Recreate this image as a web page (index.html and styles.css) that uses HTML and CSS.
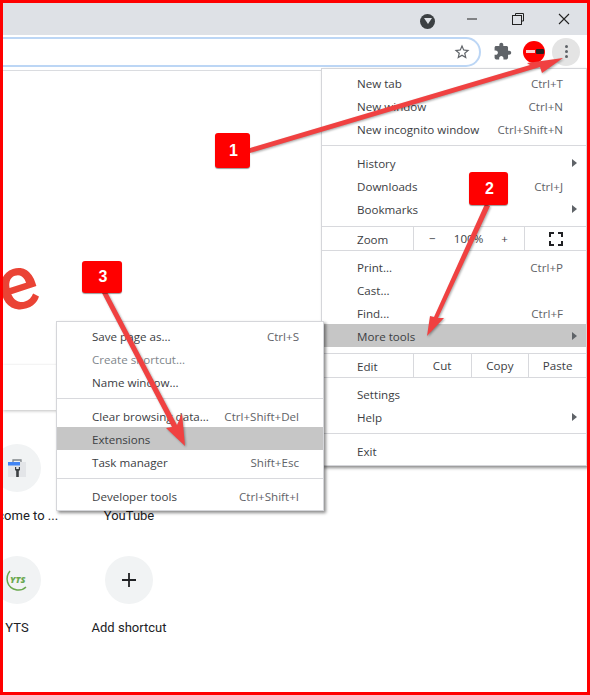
FILE: index.html
```html
<!DOCTYPE html>
<html lang="en">
<head>
  <meta charset="UTF-8" />
  <meta name="viewport" content="width=device-width, initial-scale=1.0" />
  <title>Chrome menu - More tools - Extensions</title>
  <link rel="stylesheet" href="styles.css">
</head>
<body>
  <div class="frame">
    <div class="titlebar">
      <span class="tab-search"><svg width="8" height="6" viewBox="0 0 8 6"><path d="M0 0h8L4 6z" fill="#dee1e6"/></svg></span>
      <span class="win-btn"><svg width="12" height="12" viewBox="0 0 12 12"><path d="M1 6h10" stroke="#222" stroke-width="1"/></svg></span>
      <span class="win-btn"><svg width="12" height="12" viewBox="0 0 12 12" fill="none" stroke="#222"><path d="M3.5 2.5V.5h8v7.5h-2"/><rect x=".5" y="2.5" width="9" height="9"/></svg></span>
      <span class="win-btn"><svg width="12" height="12" viewBox="0 0 12 12"><path d="M1 1l10 10M11 1L1 11" stroke="#222" stroke-width="1.1"/></svg></span>
    </div>

    <div class="toolbar">
      <div class="omnibox">
        <svg class="star" width="18" height="18" viewBox="0 0 24 24"><path fill="#5f6368" d="M22 9.24l-7.19-.62L12 2 9.19 8.63 2 9.24l5.46 4.73L5.82 21 12 17.27 18.18 21l-1.63-7.03L22 9.24zM12 15.4l-3.76 2.27 1-4.28-3.32-2.88 4.38-.38L12 6.1l1.71 4.04 4.38.38-3.32 2.88 1 4.28L12 15.4z"/></svg>
      </div>
      <svg class="puzzle" width="19" height="19" viewBox="0 0 24 24"><path fill="#5f6368" d="M20.5 11H19V7c0-1.1-.9-2-2-2h-4V3.5C13 2.12 11.88 1 10.5 1S8 2.12 8 3.5V5H4c-1.1 0-1.99.9-1.99 2v3.8H3.5c1.49 0 2.7 1.21 2.7 2.7s-1.21 2.7-2.7 2.7H2V20c0 1.1.9 2 2 2h3.8v-1.5c0-1.49 1.21-2.7 2.7-2.7 1.49 0 2.7 1.21 2.7 2.7V22H17c1.1 0 2-.9 2-2v-4h1.5c1.38 0 2.5-1.12 2.5-2.5S21.88 11 20.5 11z"/></svg>
      <span class="avatar"><span class="avatar-light"></span><span class="avatar-dark"></span></span>
      <span class="kebab"><i></i><i></i><i></i></span>
    </div>

    <div class="page">
      <div class="logo">e</div>
      <div class="searchbox"></div>
      <div class="tiles">
        <div class="tile">
          <span class="tile-icon">
            <svg width="20" height="20" viewBox="0 0 20 20">
              <path d="M6 4.500V2h8v2.500" fill="none" stroke="#80868b" stroke-width="1.300"/>
              <rect x="1" y="4" width="18" height="15" fill="#e3e5e8"/>
              <rect x="1" y="4" width="12" height="3.500" fill="#4285f4"/>
              <path d="M8 9v3l1.200 1V19h2.600v-6L13 12V9h-1.200v2H9.200V9z" fill="#3c4043"/>
            </svg>
          </span>
          <span class="tile-label">Welcome to ...</span>
        </div>
        <div class="tile">
          <span class="tile-icon"></span>
          <span class="tile-label">YouTube</span>
        </div>
        <div class="tile">
          <span class="tile-icon">
            <svg width="24" height="24" viewBox="0 0 24 24">
              <path d="M5 3C0 9 1 20 12 22c4 .5 7-1 9-3" fill="none" stroke="#6aa84f" stroke-width="1.500"/>
              <text x="5" y="15" class="yts-text">YTS</text>
            </svg>
          </span>
          <span class="tile-label">YTS</span>
        </div>
        <div class="tile">
          <span class="tile-icon">
            <svg width="16" height="16" viewBox="0 0 16 16"><path d="M8 1v14M1 8h14" stroke="#202124" stroke-width="1.800"/></svg>
          </span>
          <span class="tile-label">Add shortcut</span>
        </div>
      </div>
    </div>

    <div class="menu main-menu">
      <div class="item"><span>New tab</span><span class="key">Ctrl+T</span></div>
      <div class="item"><span>New window</span><span class="key">Ctrl+N</span></div>
      <div class="item"><span>New incognito window</span><span class="key">Ctrl+Shift+N</span></div>
      <div class="sep"></div>
      <div class="item"><span>History</span><span class="caret"></span></div>
      <div class="item"><span>Downloads</span><span class="key">Ctrl+J</span></div>
      <div class="item"><span>Bookmarks</span><span class="caret"></span></div>
      <div class="sep sep-above-row"></div>
      <div class="cell-row">
        <span class="cell-name">Zoom</span>
        <span class="zoom-box"><span>−</span><span>100%</span><span>+</span></span>
        <span class="full-box">
          <svg width="14" height="14" viewBox="0 0 14 14" fill="none" stroke="#202124" stroke-width="2"><path d="M1 5V1h4M9 1h4v4M13 9v4H9M5 13H1V9"/></svg>
        </span>
      </div>
      <div class="sep sep-below-row"></div>
      <div class="item"><span>Print...</span><span class="key">Ctrl+P</span></div>
      <div class="item"><span>Cast...</span></div>
      <div class="item"><span>Find...</span><span class="key">Ctrl+F</span></div>
      <div class="item active"><span>More tools</span><span class="caret"></span></div>
      <div class="sep sep-above-row"></div>
      <div class="cell-row">
        <span class="cell-name">Edit</span>
        <span class="edit-cell">Cut</span>
        <span class="edit-cell">Copy</span>
        <span class="edit-cell">Paste</span>
      </div>
      <div class="sep sep-below-row"></div>
      <div class="item"><span>Settings</span></div>
      <div class="item"><span>Help</span><span class="caret"></span></div>
      <div class="sep"></div>
      <div class="item"><span>Exit</span></div>
    </div>

    <div class="menu sub-menu">
      <div class="item"><span>Save page as...</span><span class="key">Ctrl+S</span></div>
      <div class="item disabled"><span>Create shortcut...</span></div>
      <div class="item"><span>Name window...</span></div>
      <div class="sep"></div>
      <div class="item"><span>Clear browsing data...</span><span class="key">Ctrl+Shift+Del</span></div>
      <div class="item active"><span>Extensions</span></div>
      <div class="item"><span>Task manager</span><span class="key">Shift+Esc</span></div>
      <div class="sep"></div>
      <div class="item"><span>Developer tools</span><span class="key">Ctrl+Shift+I</span></div>
    </div>

    <svg class="arrows" width="590" height="695" viewBox="0 0 590 695">
      <polygon points="250,148 530,65 527,63 563,58 542,73 540,67 250,153"/>
      <polygon points="485,204 490,206 438,318 444,318 427,336 430,316 434,317"/>
      <polygon points="102,293 107,292 177,425 182,413 185,446 166,428 172,427"/>
    </svg>

    <div class="badge badge-one">1</div>
    <div class="badge badge-two">2</div>
    <div class="badge badge-three">3</div>
  </div>
</body>
</html>
```

FILE: styles.css
```css
* {
  box-sizing: border-box;
}
html, body {
  margin: 0;
  height: 100%;
  background: #fff;
}
.frame {
  position: relative;
  display: flex;
  flex-direction: column;
  width: 590px;
  height: 695px;
  border: 3px solid #f00;
  overflow: hidden;
  font-family: "Open Sans", "Liberation Sans", sans-serif;
  color: #3c4043;
}

/* window chrome */
.titlebar {
  display: flex;
  justify-content: flex-end;
  align-items: center;
  height: 32px;
  flex: none;
  background: #dee1e6;
}
.tab-search {
  display: flex;
  align-items: center;
  justify-content: center;
  width: 15px;
  height: 15px;
  margin: 4px 14px 0 0;
  border-radius: 50%;
  background: #3c4043;
}
.win-btn {
  display: flex;
  align-items: center;
  justify-content: center;
  width: 46px;
  height: 24px;
}
.toolbar {
  display: flex;
  align-items: center;
  height: 36px;
  flex: none;
  padding: 0 7px 2px 0;
  border-bottom: 1px solid #dadce0;
  background: #fff;
}
.omnibox {
  display: flex;
  align-items: center;
  justify-content: flex-end;
  flex: 1;
  height: 30px;
  padding-right: 8px;
  border: 2px solid #bcd6f5;
  border-left: none;
  border-radius: 0 15px 15px 0;
}
.puzzle {
  margin: 0 11px 0 12px;
}
.avatar {
  display: flex;
  align-items: center;
  justify-content: flex-end;
  gap: 1px;
  width: 22px;
  height: 22px;
  padding: 0 1px 0 3px;
  border-radius: 50%;
  background: #f00;
}
.avatar-light {
  width: 9px;
  height: 3px;
  background: #fbd0d0;
}
.avatar-dark {
  width: 8px;
  height: 5px;
  border-radius: 1px;
  background: #222;
}
.kebab {
  display: flex;
  flex-direction: column;
  align-items: center;
  justify-content: center;
  gap: 2px;
  width: 28px;
  height: 28px;
  margin-left: 7px;
  border-radius: 50%;
  background: #e4e4e4;
}
.kebab i {
  width: 3px;
  height: 3px;
  border-radius: 50%;
  background: #5f6368;
}

/* new tab page */
.page {
  flex: 1;
  overflow: hidden;
  background: #fff;
  font-family: Roboto, sans-serif;
}
.logo {
  width: 50px;
  height: 132px;
  margin: 162px 0 0 -9px;
  font-size: 76px;
  font-weight: 500;
  line-height: 100px;
  text-align: center;
  color: #ea4335;
  transform: rotate(-18deg);
  transform-origin: 25px 58px;
}
.searchbox {
  width: 300px;
  height: 45px;
  background: #fff;
  box-shadow: 0 1px 3px rgba(0, 0, 0, 0.25);
}
.tiles {
  display: grid;
  grid-template-columns: repeat(2, 112px);
  grid-auto-rows: 112px;
  margin: 34px 0 0 -42px;
}
.tile {
  display: flex;
  flex-direction: column;
  align-items: center;
}
.tile-icon {
  display: flex;
  align-items: center;
  justify-content: center;
  width: 48px;
  height: 48px;
  border-radius: 50%;
  background: #f1f3f4;
}
.tile-label {
  margin-top: 15px;
  font-size: 13px;
  line-height: 18px;
  color: #202124;
}
.yts-text {
  font-family: "Open Sans", sans-serif;
  font-size: 9px;
  font-weight: 800;
  font-style: italic;
  fill: #6aa84f;
}

/* context menus */
.menu {
  position: absolute;
  display: flex;
  flex-direction: column;
  border: 1px solid #d5d6da;
  background: #fff;
  font-size: 11.6px;
  box-shadow: 2px 2px 3px rgba(0, 0, 0, 0.45);
}
.main-menu {
  top: 65px;
  right: 0;
  width: 266px;
  height: 398px;
  padding-top: 2px;
}
.sub-menu {
  top: 318px;
  left: 53px;
  width: 268px;
  height: 190px;
  padding-top: 2px;
  z-index: 1;
}
.sub-menu .item {
  padding-right: 24px;
}
.item {
  display: flex;
  align-items: center;
  justify-content: space-between;
  height: 23px;
  flex: none;
  padding: 1px 23px 0 35px;
}
.key {
  color: #5f6368;
}
.disabled {
  color: #80868b;
}
.active {
  background: #c6c6c6;
}
.caret {
  width: 0;
  height: 0;
  margin-right: -14px;
  border-left: 5px solid #5f6368;
  border-top: 4px solid transparent;
  border-bottom: 4px solid transparent;
}
.sep {
  height: 1px;
  flex: none;
  margin: 5px 0;
  background: #d8d9dd;
}
.sep-above-row {
  margin: 6px 0 0;
}
.sep-below-row {
  margin: 0 0 4px;
}
.cell-row {
  display: flex;
  align-items: stretch;
  height: 23px;
  flex: none;
}
.cell-name {
  display: flex;
  align-items: center;
  width: 91px;
  padding: 1px 0 0 35px;
}
.zoom-box {
  display: flex;
  align-items: center;
  justify-content: space-between;
  width: 112px;
  padding: 0 16px 0 15px;
  border-left: 1px solid #d8d9dd;
  border-right: 1px solid #d8d9dd;
}
.full-box {
  display: flex;
  align-items: center;
  justify-content: center;
  flex: 1;
}
.edit-cell {
  display: flex;
  align-items: center;
  justify-content: center;
  width: 58px;
  border-left: 1px solid #d8d9dd;
}

/* tutorial annotations */
.arrows {
  position: absolute;
  top: -3px;
  left: -3px;
  z-index: 2;
  pointer-events: none;
  filter: drop-shadow(1px 1px 1px rgba(0, 0, 0, 0.35));
}
.arrows polygon {
  fill: #f04141;
}
.badge {
  position: absolute;
  z-index: 3;
  display: flex;
  align-items: center;
  justify-content: center;
  padding-left: 2px;
  border-radius: 3px;
  background: #f00;
  font-family: "Liberation Sans", sans-serif;
  font-size: 16px;
  font-weight: 700;
  color: #fff;
  box-shadow: 0 1px 1px rgba(0, 0, 0, 0.4);
}
.badge-one {
  top: 130px;
  left: 212px;
  width: 35px;
  height: 35px;
}
.badge-two {
  top: 169px;
  left: 466px;
  width: 39px;
  height: 33px;
}
.badge-three {
  top: 258px;
  left: 79px;
  width: 40px;
  height: 32px;
}
```
